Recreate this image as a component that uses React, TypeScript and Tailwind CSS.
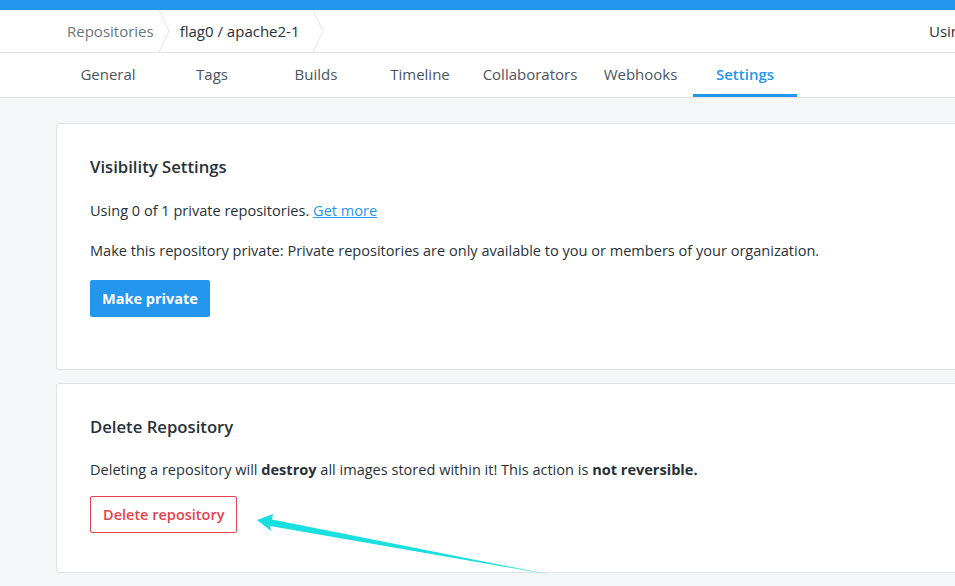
import { ReactNode } from "react";

const TABS = [
  { label: "General", w: "w-[104px]" },
  { label: "Tags", w: "w-[104px]" },
  { label: "Builds", w: "w-[104px]" },
  { label: "Timeline", w: "w-[104px]" },
  { label: "Collaborators", w: "w-[116px]" },
  { label: "Webhooks", w: "w-[105px]" },
  { label: "Settings", w: "w-[104px]", active: true },
];

const Chevron = () => (
  <svg width="12" height="42" viewBox="0 0 12 42" className="shrink-0">
    <path d="M1 0 L11 21 L1 42" fill="none" stroke="#e1e4e7" strokeWidth="1" />
  </svg>
);

const Card = ({ title, children, pb }: { title: string; children: ReactNode; pb: string }) => (
  <section className={`bg-white border border-[#dfe3e6] rounded-[3px] pl-[33px] pt-[32px] ${pb}`}>
    <h2 className="text-[16.7px] leading-[22px] font-semibold text-[#27313a]">{title}</h2>
    {children}
  </section>
);

const App = () => {
  return (
    <div className="relative w-[955px] h-[586px] overflow-hidden bg-[#f5f6f7] text-[#27313a]" style={{ fontFamily: '"Open Sans", "Liberation Sans", sans-serif' }}>
      <div className="h-[10px] bg-[#2496ed]" />
      <header className="h-[43px] bg-white border-b border-[#e1e4e7] flex items-center pl-[67px]">
        <span className="text-[15px] text-[#6a7680]">Repositories</span>
        <span className="ml-[4px] mr-[10px] flex"><Chevron /></span>
        <span className="text-[15px] text-[#27313a]">flag0 / apache2-1</span>
        <span className="ml-[12px] flex"><Chevron /></span>
        <span className="ml-auto w-[26px] overflow-hidden whitespace-nowrap text-[15px]">Usin</span>
      </header>
      <nav className="h-[45px] bg-white border-b border-[#e1e4e7] flex pl-[56px]">
        {TABS.map(({ label, w, active }) => (
          <div key={label} className={`${w} flex items-center justify-center pt-[2px] text-[15px] border-b-[3px] ${active ? "border-[#2496ed] text-[#2496ed] font-semibold" : "border-transparent text-[#4a5560]"}`}>
            {label}
          </div>
        ))}
      </nav>
      <main className="pl-[56px] pt-[25px] w-[1020px] flex flex-col gap-[13px]">
        <Card title="Visibility Settings" pb="pb-[52px]">
          <p className="mt-[22px] text-[14.55px] leading-[20px]">
            Using 0 of 1 private repositories.{" "}
            <a className="text-[#2496ed] underline">Get more</a>
          </p>
          <p className="mt-[20px] text-[14.55px] leading-[20px]">
            Make this repository private: Private repositories are only available to you or members of your organization.
          </p>
          <button className="mt-[20px] h-[37px] px-[12px] bg-[#2496ed] text-white text-[14.5px] font-bold rounded-[2px]">Make private</button>
        </Card>
        <Card title="Delete Repository" pb="pb-[39px]">
          <p className="mt-[21px] text-[14.55px] leading-[20px]">
            Deleting a repository will <b>destroy</b> all images stored within it! This action is <b>not reversible.</b>
          </p>
          <button className="mt-[17px] h-[37px] px-[12px] bg-white border border-[#e5424d] text-[#e5424d] text-[14.5px] font-semibold rounded-[2px]">Delete repository</button>
        </Card>
      </main>
      <svg className="absolute left-0 top-0 pointer-events-none" width="955" height="586">
        <polygon points="257,520 273,514 272,519.5 552,575 270,526 271,531" fill="#19dfdf" />
      </svg>
    </div>
  );
};

export default App;
